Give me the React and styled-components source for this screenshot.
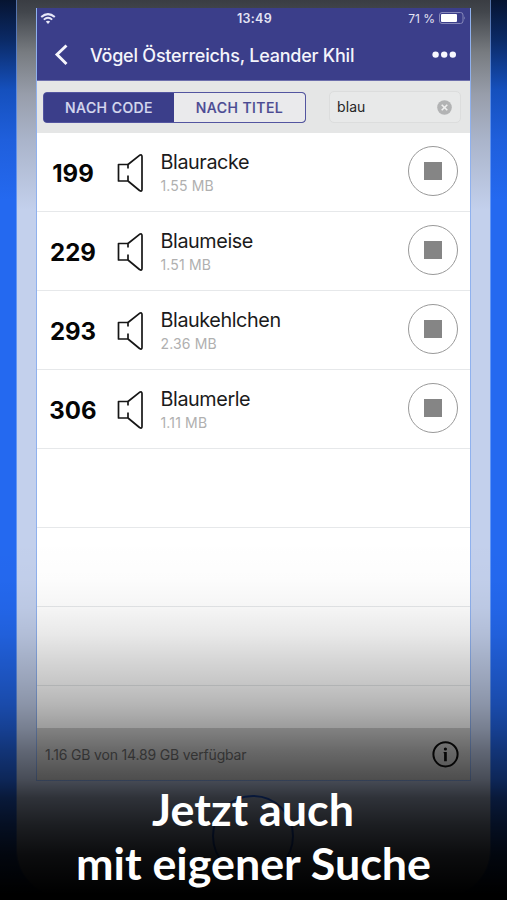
import React from "react"
import styled, { createGlobalStyle } from "styled-components"

const GlobalStyle = createGlobalStyle`
  * {
    box-sizing: border-box;
  }
  body {
    margin: 0;
    background: #000;
  }
`

const Page = styled.main`
  position: relative;
  width: 507px;
  height: 900px;
  overflow: hidden;
  padding: 0 16px;
  background: linear-gradient(
    #061431 0,
    #0b2a66 40px,
    #1550bd 90px,
    #1f5fdc 140px,
    #2469f0 200px
  );
  font-family: Inter, "Liberation Sans", sans-serif;
`

const Phone = styled.div`
  width: 475px;
  height: 896px;
  padding: 8px 20px 0 19px;
  border: solid rgba(140, 178, 245, 0.6);
  border-width: 0 1px;
  border-radius: 0 0 46px 46px;
  background: linear-gradient(
    #3a3d43 0,
    #42464c 12px,
    #777b80 52px,
    #989eab 95px,
    #aab4ca 140px,
    #c3d0ec 210px
  );
  background-clip: padding-box;
`

const Screen = styled.div`
  display: flex;
  flex-direction: column;
  width: 435px;
  height: 773px;
  border: 1px solid #8fb1ee;
  border-top: 0;
  background: #fff;
`

const Header = styled.header`
  flex: none;
  height: 73px;
  border-bottom: 1px solid #6d6fac;
  background: #3b3e8a;
  color: #f4f4fb;
`

const StatusBar = styled.div`
  display: grid;
  grid-template-columns: 1fr auto 1fr;
  align-items: center;
  height: 20px;
  padding: 0 4px 0 3px;
  font-size: 12px;
  color: #e4e4f4;
  svg {
    display: block;
  }
`

const Clock = styled.span`
  padding-left: 3px;
  font-size: 12.5px;
  font-weight: 600;
  letter-spacing: 0.3px;
`

const Battery = styled.span`
  display: flex;
  align-items: center;
  justify-content: flex-end;
  gap: 4px;
`

const NavBar = styled.div`
  display: flex;
  align-items: center;
  height: 53px;
  padding: 0 14px 0 17px;
`

const Title = styled.h1`
  flex: 1;
  margin: 1px 0 0 21px;
  font-size: 18px;
  font-weight: 500;
  letter-spacing: -0.23px;
  white-space: nowrap;
`

const Toolbar = styled.div`
  display: flex;
  flex: none;
  align-items: center;
  justify-content: space-between;
  height: 52px;
  padding: 0 9px 0 6px;
  background: #e5e6e6;
`

const Segments = styled.div`
  display: flex;
  width: 263px;
  height: 31px;
  overflow: hidden;
  border: 1px solid #5355a0;
  border-radius: 4px;
  background: #3b3e8a;
`

const Segment = styled.button`
  flex: none;
  width: 130px;
  padding: 0;
  border: 0;
  background: ${({ $active }) => ($active ? "#3b3e8a" : "#eaeaec")};
  color: ${({ $active }) => ($active ? "#d5d8ee" : "#4b4a93")};
  font: 500 14px Inter, sans-serif;
  letter-spacing: 0.45px;
  -webkit-text-stroke: 0.2px;
  &:last-child {
    width: 131px;
    border-radius: 0 3px 3px 0;
  }
`

const Search = styled.div`
  display: flex;
  align-items: center;
  justify-content: space-between;
  width: 132px;
  height: 32px;
  padding: 0 8px 2px 7px;
  border: 1px solid #dcdddd;
  border-radius: 5px;
  background: #e8e9e9;
  color: #262626;
  font-size: 14px;
  letter-spacing: 0.1px;
  svg {
    margin-top: 2px;
  }
`

const List = styled.ul`
  flex: 1;
  min-height: 0;
  margin: 0;
  padding: 0;
  overflow: hidden;
  list-style: none;
`

const Row = styled.li`
  display: flex;
  align-items: center;
  height: 79px;
  padding: 0 12.5px 2px 0;
  border-bottom: 1px solid #e6e8ea;
`

const Code = styled.span`
  width: 72px;
  padding-top: 4px;
  color: #050505;
  font-size: 24px;
  font-weight: 700;
  text-align: center;
`

const SpeakerIcon = styled.svg`
  flex: none;
  margin: 3px 0 0 8px;
`

const Details = styled.div`
  flex: 1;
  margin-left: 16.5px;
  padding-top: 3px;
`

const Name = styled.div`
  color: #1b1b1b;
  font-size: 19.8px;
  line-height: 26px;
  letter-spacing: -0.42px;
`

const Size = styled.div`
  color: #b0b0b0;
  font-size: 14px;
  line-height: 22px;
  letter-spacing: 0.15px;
`

const StopButton = styled.button`
  display: grid;
  place-items: center;
  width: 50px;
  height: 50px;
  padding: 0;
  border: 1px solid #999;
  border-radius: 50%;
  background: none;
  &::after {
    content: "";
    width: 18px;
    height: 18px;
    background: #858585;
  }
`

const Footer = styled.footer`
  display: flex;
  flex: none;
  align-items: center;
  justify-content: space-between;
  height: 52px;
  padding: 1px 11px 0 8px;
  background: #d4d4d4;
  color: #6c6c6c;
  font-size: 14px;
  letter-spacing: -0.17px;
`

const HomeButton = styled.div`
  width: 82px;
  height: 82px;
  margin: 14px auto 0;
  border: 2px solid #2260e4;
  border-radius: 50%;
`

// Darkens the lower part of the device behind the caption
const Shade = styled.div`
  position: absolute;
  inset: 540px 0 0;
  background: linear-gradient(
    transparent 0,
    rgba(0, 0, 0, 0.01) 40px,
    rgba(0, 0, 0, 0.04) 68px,
    rgba(0, 0, 0, 0.09) 95px,
    rgba(0, 0, 0, 0.16) 120px,
    rgba(0, 0, 0, 0.22) 142px,
    rgba(0, 0, 0, 0.29) 165px,
    rgba(0, 0, 0, 0.39) 188px,
    rgba(0, 0, 0, 0.5) 210px,
    rgba(0, 0, 0, 0.63) 239px,
    rgba(0, 0, 0, 0.76) 258px,
    rgba(0, 0, 0, 0.86) 285px,
    rgba(0, 0, 0, 0.94) 315px,
    #000 354px
  );
`

const Caption = styled.h2`
  position: absolute;
  inset: 782px 0 auto;
  margin: 0;
  color: #fff;
  font: 700 44.8px/54px Lato, sans-serif;
  text-align: center;
  text-indent: -1px;
`

const birds = [
  { code: 199, name: "Blauracke", size: "1.55 MB" },
  { code: 229, name: "Blaumeise", size: "1.51 MB" },
  { code: 293, name: "Blaukehlchen", size: "2.36 MB" },
  { code: 306, name: "Blaumerle", size: "1.11 MB" },
]

const Speaker = () => (
  <SpeakerIcon
    width="27"
    height="38"
    viewBox="0 0 27 38"
    fill="none"
    stroke="#161616"
    strokeWidth="1.7"
    strokeLinejoin="round"
  >
    <path d="M11 14.5V10.5H1.5V27H11V21.5" />
    <path d="M11 10.5L22.5 1.3Q25 0 25 2.6V35.4Q25 38 22.5 36.5L11 27" />
  </SpeakerIcon>
)

const App = () => (
  <>
    <GlobalStyle />
    <Page>
      <Phone>
        <Screen>
          <Header>
            <StatusBar>
              <svg width="16" height="11" viewBox="0 0 16 11" fill="none">
                <path d="M1.2 4Q8-1.8 14.8 4" stroke="#e8e8f8" strokeWidth="2" />
                <path d="M3.8 6.6Q8 3 12.2 6.6" stroke="#e8e8f8" strokeWidth="1.8" />
                <path d="M5.8 8.6Q8 6.8 10.2 8.6L8 11Z" fill="#e8e8f8" />
              </svg>
              <Clock>13:49</Clock>
              <Battery>
                71 %
                <svg width="27" height="12" viewBox="0 0 27 12">
                  <rect x=".5" y=".5" width="23.5" height="11" rx="2.5" fill="none" stroke="#8688b9" />
                  <rect x="2" y="2" width="16" height="8" rx="1" fill="#fff" />
                  <path d="M25.2 4.2Q27 6 25.2 7.8Z" fill="#8688b9" />
                </svg>
              </Battery>
            </StatusBar>
            <NavBar>
              <svg width="15" height="22" viewBox="0 0 15 22" fill="none">
                <path d="M12.5 1.5L3 10.5L12.5 20" stroke="#f6f6fc" strokeWidth="2.9" />
              </svg>
              <Title>Vögel Österreichs, Leander Khil</Title>
              <svg width="24" height="8" viewBox="0 0 24 8" fill="#f8f8ff">
                <circle cx="3.6" cy="3.6" r="3.2" />
                <circle cx="12.2" cy="3.6" r="3.2" />
                <circle cx="20.8" cy="3.6" r="3.2" />
              </svg>
            </NavBar>
          </Header>
          <Toolbar>
            <Segments>
              <Segment $active>NACH CODE</Segment>
              <Segment>NACH TITEL</Segment>
            </Segments>
            <Search>
              blau
              <svg width="15" height="15" viewBox="0 0 15 15">
                <circle cx="7.5" cy="7.5" r="7.3" fill="#b2b3b4" />
                <path d="M4.7 4.7L10.3 10.3M10.3 4.7L4.7 10.3" stroke="#efefef" strokeWidth="1.6" />
              </svg>
            </Search>
          </Toolbar>
          <List>
            {birds.map(({ code, name, size }) => (
              <Row key={code}>
                <Code>{code}</Code>
                <Speaker />
                <Details>
                  <Name>{name}</Name>
                  <Size>{size}</Size>
                </Details>
                <StopButton aria-label="Stop" />
              </Row>
            ))}
            <Row />
            <Row />
            <Row />
          </List>
          <Footer>
            1.16 GB von 14.89 GB verfügbar
            <svg width="27" height="27" viewBox="0 0 27 27">
              <circle cx="13.5" cy="13.3" r="12.1" fill="none" stroke="#0c0c0c" strokeWidth="2" />
              <circle cx="13.4" cy="8" r="1.6" fill="#0c0c0c" />
              <path d="M11.6 11H14.8V20.3H12.1V12.3H11.6Z" fill="#0c0c0c" />
            </svg>
          </Footer>
        </Screen>
        <HomeButton />
      </Phone>
      <Shade />
      <Caption>
        Jetzt auch
        <br />
        mit eigener Suche
      </Caption>
    </Page>
  </>
)

export default App
